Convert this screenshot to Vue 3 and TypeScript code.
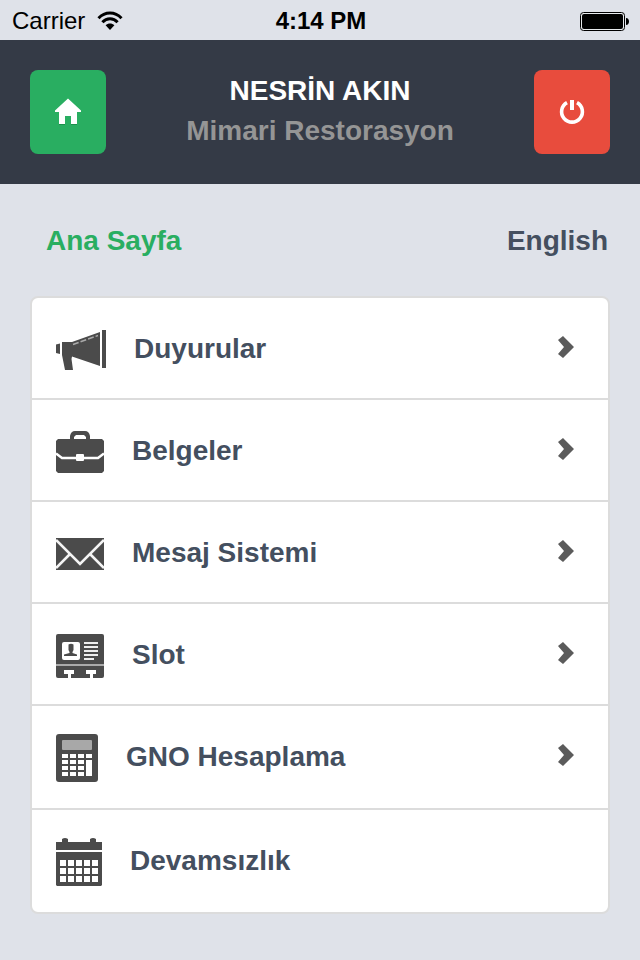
<script setup lang="ts">
type IconName = 'megaphone' | 'briefcase' | 'mail' | 'board' | 'calculator' | 'calendar'

interface MenuItem {
  label: string
  icon: IconName
  arrow: boolean
}

const items: MenuItem[] = [
  { label: 'Duyurular', icon: 'megaphone', arrow: true },
  { label: 'Belgeler', icon: 'briefcase', arrow: true },
  { label: 'Mesaj Sistemi', icon: 'mail', arrow: true },
  { label: 'Slot', icon: 'board', arrow: true },
  { label: 'GNO Hesaplama', icon: 'calculator', arrow: true },
  { label: 'Devamsızlık', icon: 'calendar', arrow: false },
]

const keyRows: number[] = [20, 26, 32, 38]
const dayRows: number[] = [22, 30, 38]
const dayColumns: number[] = [4, 12, 20, 28, 36]
</script>

<template>
  <div class="app">
    <div class="status">
      <div class="carrier">
        <span>Carrier</span>
        <svg width="26" height="20" viewBox="0 0 26 20" aria-hidden="true">
          <path d="M1.500 7.200C8 .4 18 .4 24.500 7.200" fill="none" stroke="#000" stroke-width="3" />
          <path d="M5.400 11.200C9.700 6.700 16.300 6.700 20.600 11.200" fill="none" stroke="#000" stroke-width="3" />
          <path d="M8.600 14.200C11.200 11.800 14.800 11.800 17.400 14.200L13 19z" />
        </svg>
      </div>
      <span class="time">4:14 PM</span>
      <div class="power">
        <svg width="50" height="20" viewBox="0 0 50 20" aria-hidden="true">
          <rect x=".5" y="1.500" width="44" height="18" rx="3" fill="#e8ebee" stroke="#000" />
          <rect x="2" y="3" width="41" height="15" rx="2" />
          <path d="M46 7c4 0 4 7 0 7z" />
        </svg>
      </div>
    </div>

    <header class="header">
      <button type="button" class="square home" aria-label="Ana Sayfa">
        <svg width="28" height="28" viewBox="0 0 28 28" aria-hidden="true">
          <path d="M5 26h6v1H5zM17 26h6v1h-6z" fill="#1c8f4b" />
          <path d="M14 .5L1 12.500v1.500h4V26h6v-8h6v8h6V14h4v-1.500z" fill="#fff" />
        </svg>
      </button>
      <div class="person">
        <h1>NESRİN AKIN</h1>
        <p>Mimari Restorasyon</p>
      </div>
      <button type="button" class="square exit" aria-label="Çıkış">
        <svg width="28" height="28" viewBox="0 0 28 28" aria-hidden="true">
          <path d="M9 4.600A10.400 10.400 0 1 0 19 4.600" fill="none" stroke="#fff" stroke-width="3.600" />
          <path d="M12 2h4v10h-4z" fill="#fff" />
        </svg>
      </button>
    </header>

    <main class="content">
      <div class="links">
        <a href="#" class="current">Ana Sayfa</a>
        <a href="#">English</a>
      </div>

      <nav>
        <ul class="menu">
          <li v-for="item in items" :key="item.label">
            <a href="#" class="row">
              <svg v-if="item.icon === 'megaphone'" class="icon" width="50" height="40" viewBox="0 0 50 40" aria-hidden="true">
                <path d="M0 14.500L4 13.500V24l-4-1zM6 12H16L44 2V36L16 26.500L15.500 29L17 40H9L6 25z" />
                <path d="M46 0h4v38h-4z" />
                <path d="M17 14.500L42 5.500" fill="none" stroke="#aaa" stroke-width="1.500" stroke-dasharray="6 2" />
              </svg>
              <svg v-else-if="item.icon === 'briefcase'" class="icon" width="48" height="42" viewBox="0 0 48 42" aria-hidden="true">
                <path d="M2 8H14V5Q15 0 19 0H29Q33 0 34 5V8H46L48 10V40L46 42H2L0 40V10z" />
                <path d="M18 8V6L20 4H28L30 6V8z" fill="#fff" />
                <path d="M0 22.500L6 27H42L48 22.500" fill="none" stroke="#fff" stroke-width="2.500" />
                <rect x="20" y="23" width="8" height="7" rx="1" fill="#fff" />
              </svg>
              <svg v-else-if="item.icon === 'mail'" class="icon" width="48" height="32" viewBox="0 0 48 32" aria-hidden="true">
                <path d="M0 0h48v32H0z" />
                <path d="M0 2L24 26L48 2M0 30L14 16M48 30L34 16" fill="none" stroke="#f4f4f4" stroke-width="2.600" />
              </svg>
              <svg v-else-if="item.icon === 'board'" class="icon" width="48" height="44" viewBox="0 0 48 44" aria-hidden="true">
                <rect width="48" height="44" rx="2" />
                <rect x="6" y="8" width="18" height="18" rx="2" fill="#fff" />
                <path d="M12.500 10.500Q15 9 17.500 10.500V16L16.500 18V19L21 20.500V22H8V20.500L13.500 19V18L12.500 16z" />
                <path d="M28 9h14M28 13h14M28 17h14M28 21h14M28 25h10" fill="none" stroke="#eee" stroke-width="2" />
                <path d="M0 31h48" stroke="#aaa" stroke-width="2" />
                <path d="M8 36h10v4h-3v4h-3v-4H8zM30 36h10v4h-3v4h-3v-4h-4z" fill="#fff" />
              </svg>
              <svg v-else-if="item.icon === 'calculator'" class="icon" width="42" height="48" viewBox="0 0 42 48" aria-hidden="true">
                <rect width="42" height="48" rx="3" />
                <rect x="6" y="6" width="30" height="10" rx="1" fill="#a8a8a8" />
                <g fill="#fff">
                  <template v-for="y in keyRows" :key="y">
                    <rect x="6" :y="y" width="6" height="4" />
                    <rect x="14" :y="y" width="6" height="4" />
                    <rect x="22" :y="y" width="6" height="4" />
                  </template>
                  <rect x="30" y="20" width="6" height="4" />
                  <rect x="30" y="26" width="6" height="16" />
                </g>
              </svg>
              <svg v-else class="icon" width="46" height="48" viewBox="0 0 46 48" aria-hidden="true">
                <path d="M0 4H6V1Q9-1 12 1V4H34V1Q37-1 40 1V4H46V47L45 48H1L0 47z" />
                <path d="M0 13h46" stroke="#fff" stroke-width="2" />
                <g fill="#fff">
                  <template v-for="y in dayRows" :key="y">
                    <rect v-for="x in dayColumns" :key="x" :x="x" :y="y" width="6" height="6" />
                  </template>
                </g>
              </svg>
              <span class="label">{{ item.label }}</span>
              <svg v-if="item.arrow" class="arrow" width="16" height="22" viewBox="0 0 16 22" aria-hidden="true">
                <path d="M5 0L16 11L5 22L0 18L6 11L0 4z" />
              </svg>
            </a>
          </li>
        </ul>
      </nav>
    </main>
  </div>
</template>

<style>
body {
  background: #dfe2e9;
}
</style>

<style scoped>
.app {
  min-height: 100vh;
  background: #dfe2e9;
  color: #444f5f;
  font-family: "Liberation Sans", Arial, sans-serif;
  font-size: 28px;
  line-height: 40px;
}

.status {
  display: grid;
  grid-template-columns: 1fr auto 1fr;
  align-items: center;
  height: 40px;
  padding: 0 10px 0 12px;
  color: #000;
  font-size: 24px;
  line-height: 42px;
}

.carrier {
  display: flex;
  align-items: center;
  gap: 12px;
}

.time {
  font-weight: bold;
}

.power {
  display: flex;
  justify-content: flex-end;
}

.header {
  display: flex;
  justify-content: space-between;
  align-items: center;
  padding: 30px;
  background: #343a46;
}

.square {
  display: flex;
  align-items: center;
  justify-content: center;
  width: 76px;
  height: 84px;
  padding: 0;
  border: 0;
  border-radius: 8px;
}

.home {
  background: #29ae61;
}

.exit {
  background: #e84c3d;
}

.person {
  padding-bottom: 2px;
  text-align: center;
}

.person h1,
.person p {
  margin: 0;
  font-size: 28px;
  font-weight: bold;
}

.person h1 {
  color: #fff;
}

.person p {
  color: #959595;
}

.content {
  padding: 37px 30px 46px;
}

.links {
  display: flex;
  justify-content: space-between;
  padding: 0 2px 35px 16px;
}

.links a {
  color: inherit;
  font-weight: bold;
  text-decoration: none;
}

.links .current {
  color: #29ae61;
}

.menu {
  margin: 0;
  padding: 0;
  list-style: none;
  background: #fff;
  border: 2px solid #dcdcdc;
  border-radius: 8px;
}

.menu li + li {
  border-top: 2px solid #dcdcdc;
}

.menu li:nth-child(n + 5) {
  padding-bottom: 2px;
}

.row {
  display: flex;
  align-items: center;
  gap: 28px;
  height: 100px;
  padding: 0 34px 0 24px;
  color: inherit;
  font-weight: bold;
  text-decoration: none;
}

.icon {
  flex: none;
  margin-top: 4px;
  fill: #4b4b4b;
}

.label {
  flex: 1;
  padding-top: 2px;
}

.arrow {
  flex: none;
  margin-bottom: 2px;
  fill: #5b5b5b;
}
</style>
